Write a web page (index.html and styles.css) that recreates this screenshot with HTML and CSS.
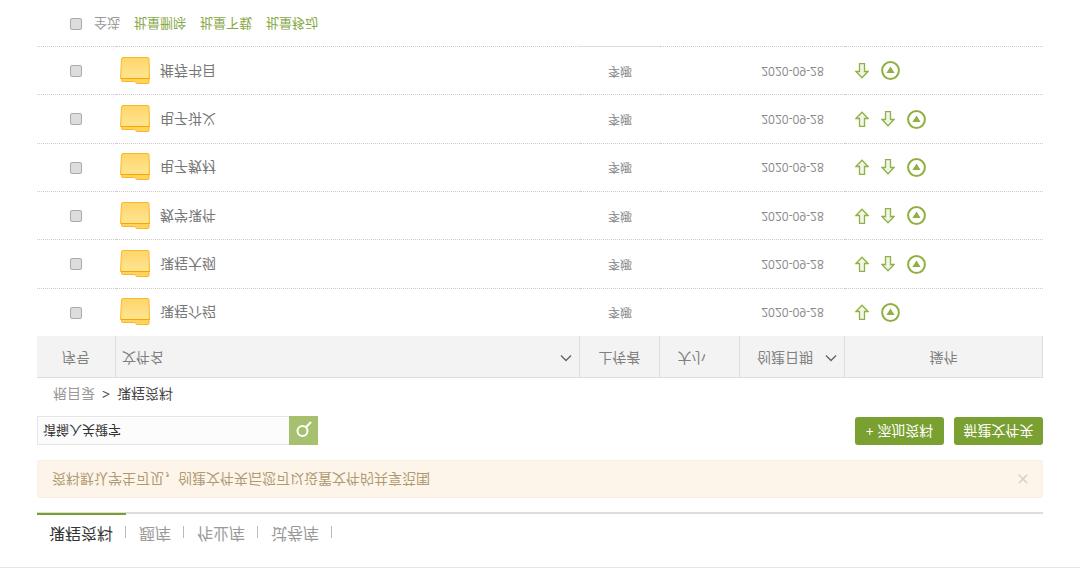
FILE: index.html
```
<!DOCTYPE html>
<html lang="zh-CN">
<head>
    <meta charset="UTF-8">
    <meta name="viewport" content="width=device-width, initial-scale=1.0">
    <title>课程资料</title>
    <link rel="stylesheet" href="styles.css">
</head>
<body>
    <svg width="0" height="0" class="sprite" aria-hidden="true">
        <defs>
            <linearGradient id="folderFill" x1="0" y1="0" x2="0" y2="1">
                <stop offset="0" stop-color="#ffe591"/>
                <stop offset="1" stop-color="#ffd56b"/>
            </linearGradient>
        </defs>
        <symbol id="folder" viewBox="0 0 30 28">
            <path d="M1.5 8V4.5Q1.5 3.5 2.5 3.5H14.5L17 1.5H28Q29 1.5 29 2.5V8Z" fill="#ffd35c" stroke="#fbb826"/>
            <path d="M0.5 6.5H29.5L29 26Q29 27.5 28 27.5H3Q1.6 27.5 1.5 26Z" fill="url(#folderFill)" stroke="#fbb826"/>
            <path d="M1 6.5H29.5" stroke="#f7a600" fill="none"/>
        </symbol>
        <symbol id="down" viewBox="0 0 14 16">
            <path d="M4.5 0.7H9.5V8.5H13L7 14.8L1 8.5H4.5Z" fill="#f1f6e4" stroke="#8fb248" stroke-width="1.3"/>
        </symbol>
        <symbol id="up" viewBox="0 0 14 16">
            <path d="M4.5 15.3H9.5V7.5H13L7 1.2L1 7.5H4.5Z" fill="#f1f6e4" stroke="#8fb248" stroke-width="1.3"/>
        </symbol>
        <symbol id="more" viewBox="0 0 19 19">
            <circle cx="9.5" cy="9.5" r="8.4" fill="none" stroke="#8fb040" stroke-width="2"/>
            <path d="M5.4 7H13.6L9.5 13.4Z" fill="#8fb040"/>
        </symbol>
        <symbol id="chevron" viewBox="0 0 12 8">
            <path d="M1 6.5L6 1.5L11 6.5" fill="none" stroke="#666" stroke-width="1.4"/>
        </symbol>
    </svg>

    <div class="page">
        <div class="container">
            <nav class="tabs">
                <a href="#" class="active">课程资料</a>
                <a href="#">题库</a>
                <a href="#">作业库</a>
                <a href="#">试卷库</a>
            </nav>

            <div class="notice">
                <span>资料默认学生可见，创建文件夹后您可以设置文件的共享范围</span>
                <button class="close" aria-label="关闭">
                    <svg width="10" height="10" viewBox="0 0 10 10"><path d="M0.8 0.8L9.2 9.2M9.2 0.8L0.8 9.2" stroke="#d9d0c1" stroke-width="1.6"/></svg>
                </button>
            </div>

            <div class="toolbar">
                <form class="search">
                    <input type="text" placeholder="请输入关键字" aria-label="关键字">
                    <button type="button" aria-label="搜索">
                        <svg width="18" height="18" viewBox="0 0 18 18" fill="none" stroke="#fff" stroke-width="2"><circle cx="7.5" cy="8" r="5"/><path d="M11 11.8L16 17"/></svg>
                    </button>
                </form>
                <div class="actions">
                    <button class="btn">+ 添加资料</button>
                    <button class="btn">新建文件夹</button>
                </div>
            </div>

            <div class="crumbs">
                <a href="#">根目录</a>
                <span>&gt;</span>
                <span>课程资料</span>
            </div>

            <table class="files">
                <thead>
                    <tr>
                        <th class="col-no">序号</th>
                        <th class="col-name"><div class="sort">文件名<svg width="12" height="8"><use href="#chevron"/></svg></div></th>
                        <th class="col-user">上传者</th>
                        <th class="col-size">大小</th>
                        <th class="col-date"><div class="sort">创建日期<svg width="12" height="8"><use href="#chevron"/></svg></div></th>
                        <th class="col-ops">操作</th>
                    </tr>
                </thead>
                <tbody>
                    <tr>
                        <td><input type="checkbox" aria-label="课程介绍"></td>
                        <td><a href="#" class="name"><svg width="30" height="28"><use href="#folder"/></svg>课程介绍</a></td>
                        <td>李娜</td>
                        <td></td>
                        <td>2020-09-28</td>
                        <td><div class="ops">
                            <button aria-label="下移"><svg width="14" height="16"><use href="#down"/></svg></button>
                            <button aria-label="更多"><svg width="19" height="19"><use href="#more"/></svg></button>
                        </div></td>
                    </tr>
                    <tr>
                        <td><input type="checkbox" aria-label="课程大纲"></td>
                        <td><a href="#" class="name"><svg width="30" height="28"><use href="#folder"/></svg>课程大纲</a></td>
                        <td>李娜</td>
                        <td></td>
                        <td>2020-09-28</td>
                        <td><div class="ops">
                            <button aria-label="下移"><svg width="14" height="16"><use href="#down"/></svg></button>
                            <button aria-label="上移"><svg width="14" height="16"><use href="#up"/></svg></button>
                            <button aria-label="更多"><svg width="19" height="19"><use href="#more"/></svg></button>
                        </div></td>
                    </tr>
                    <tr>
                        <td><input type="checkbox" aria-label="教学课件"></td>
                        <td><a href="#" class="name"><svg width="30" height="28"><use href="#folder"/></svg>教学课件</a></td>
                        <td>李娜</td>
                        <td></td>
                        <td>2020-09-28</td>
                        <td><div class="ops">
                            <button aria-label="下移"><svg width="14" height="16"><use href="#down"/></svg></button>
                            <button aria-label="上移"><svg width="14" height="16"><use href="#up"/></svg></button>
                            <button aria-label="更多"><svg width="19" height="19"><use href="#more"/></svg></button>
                        </div></td>
                    </tr>
                    <tr>
                        <td><input type="checkbox" aria-label="电子教材"></td>
                        <td><a href="#" class="name"><svg width="30" height="28"><use href="#folder"/></svg>电子教材</a></td>
                        <td>李娜</td>
                        <td></td>
                        <td>2020-09-28</td>
                        <td><div class="ops">
                            <button aria-label="下移"><svg width="14" height="16"><use href="#down"/></svg></button>
                            <button aria-label="上移"><svg width="14" height="16"><use href="#up"/></svg></button>
                            <button aria-label="更多"><svg width="19" height="19"><use href="#more"/></svg></button>
                        </div></td>
                    </tr>
                    <tr>
                        <td><input type="checkbox" aria-label="电子讲义"></td>
                        <td><a href="#" class="name"><svg width="30" height="28"><use href="#folder"/></svg>电子讲义</a></td>
                        <td>李娜</td>
                        <td></td>
                        <td>2020-09-28</td>
                        <td><div class="ops">
                            <button aria-label="下移"><svg width="14" height="16"><use href="#down"/></svg></button>
                            <button aria-label="上移"><svg width="14" height="16"><use href="#up"/></svg></button>
                            <button aria-label="更多"><svg width="19" height="19"><use href="#more"/></svg></button>
                        </div></td>
                    </tr>
                    <tr>
                        <td><input type="checkbox" aria-label="推荐书目"></td>
                        <td><a href="#" class="name"><svg width="30" height="28"><use href="#folder"/></svg>推荐书目</a></td>
                        <td>李娜</td>
                        <td></td>
                        <td>2020-09-28</td>
                        <td><div class="ops">
                            <button aria-label="上移"><svg width="14" height="16"><use href="#up"/></svg></button>
                            <button aria-label="更多"><svg width="19" height="19"><use href="#more"/></svg></button>
                        </div></td>
                    </tr>
                </tbody>
            </table>

            <div class="batch">
                <label><input type="checkbox">全选</label>
                <button>批量删除</button>
                <button>批量下载</button>
                <button>批量移动</button>
            </div>
        </div>
    </div>
</body>
</html>
```
FILE: styles.css
```
* {
    box-sizing: border-box;
}
body {
    margin: 0;
    background-color: #fff;
    font-family: "Open Sans", "Noto Sans CJK SC", sans-serif;
    font-size: 14px;
    line-height: 20px;
    color: #777;
}
a {
    color: inherit;
    text-decoration: none;
}
button {
    padding: 0;
    border: none;
    background: none;
    font: inherit;
    color: inherit;
    cursor: pointer;
}
svg {
    display: block;
}
.sprite {
    position: absolute;
}
/* the whole page is shown flipped top to bottom */
.page {
    min-height: 100vh;
    padding-top: 4px;
    transform: scaleY(-1);
}
.container {
    border-top: 1px solid #e5e5e5;
    padding: 15px 37px 0;
}
.tabs {
    display: flex;
    align-items: center;
    height: 40px;
    border-bottom: 2px solid #ddd;
    font-size: 16px;
    color: #999;
}
.tabs a {
    display: flex;
    align-items: center;
    height: 40px;
    padding-left: 12px;
    border-bottom: 2px solid transparent;
}
.tabs a::after {
    content: "";
    width: 1px;
    height: 12px;
    margin-left: 12px;
    margin-top: 4px;
    background-color: #bbb;
}
.tabs a + a {
    padding-left: 13px;
}
.tabs .active {
    border-color: #7ba032;
    color: #333;
}
.notice {
    display: flex;
    align-items: center;
    justify-content: space-between;
    height: 38px;
    margin-top: 14px;
    padding: 0 14px;
    border: 1px solid #faf0e0;
    border-radius: 3px;
    background-color: #fdf5e9;
    color: #b09972;
}
.toolbar {
    display: flex;
    justify-content: space-between;
    align-items: flex-start;
    margin-top: 15px;
}
.search {
    display: flex;
}
.search input {
    width: 252px;
    height: 29px;
    padding: 0 5px 2px;
    border: 1px solid #e5e5e5;
    border-right: none;
    background-color: #fcfcfc;
    font: inherit;
    font-size: 13px;
}
.search input::placeholder {
    color: #333;
}
.search button {
    display: flex;
    align-items: center;
    justify-content: center;
    width: 29px;
    height: 29px;
    background-color: #a6c070;
}
.actions {
    display: flex;
    gap: 10px;
}
.btn {
    min-width: 89px;
    height: 28px;
    padding: 0 9px;
    border-radius: 3px;
    background-color: #7ba032;
    color: #fff;
}
.crumbs {
    display: flex;
    gap: 7px;
    padding: 12px 16px 6px;
    color: #444;
}
.crumbs a {
    color: #999;
}
.files {
    width: 100%;
    height: 332px;
    border-collapse: separate;
    border-spacing: 0;
    table-layout: fixed;
}
.files th {
    height: 42px;
    padding: 0 0 3px;
    border-top: 1px solid #ddd;
    border-right: 1px solid #ddd;
    background-color: #f3f3f3;
    font-weight: normal;
    color: #808080;
}
.files td {
    padding: 0;
    border-bottom: 1px dotted #ccc;
    text-align: center;
    font-size: 12px;
    color: #888;
}
.files td:first-child {
    padding: 0 2px 2px 0;
}
.files tr:last-child td:nth-child(3) {
    border-bottom: 1px solid #ddd;
}
.col-no {
    width: 79px;
}
.files .col-user, .files .col-size {
    width: 80px;
}
.files .col-size {
    padding-right: 16px;
}
.col-date {
    width: 105px;
}
.col-ops {
    width: 198px;
}
.sort {
    display: flex;
    align-items: center;
    justify-content: space-between;
    padding: 0 7px 0 6px;
}
.col-date .sort {
    padding-left: 17px;
}
.name {
    display: flex;
    align-items: center;
    gap: 10px;
    padding-left: 4px;
    font-size: 14px;
    color: #777;
}
.ops {
    display: flex;
    align-items: center;
    gap: 12px;
    padding-left: 10px;
}
input[type="checkbox"] {
    appearance: none;
    width: 12px;
    height: 12px;
    margin: 0;
    border: 1px solid #aaa;
    border-radius: 2px;
    background-color: #ddd;
    vertical-align: middle;
}
.batch {
    display: flex;
    align-items: center;
    gap: 14px;
    height: 44px;
    padding-left: 33px;
    font-size: 13px;
    color: #86a745;
}
.batch label {
    display: flex;
    align-items: center;
    gap: 12px;
    color: #999;
}
```
